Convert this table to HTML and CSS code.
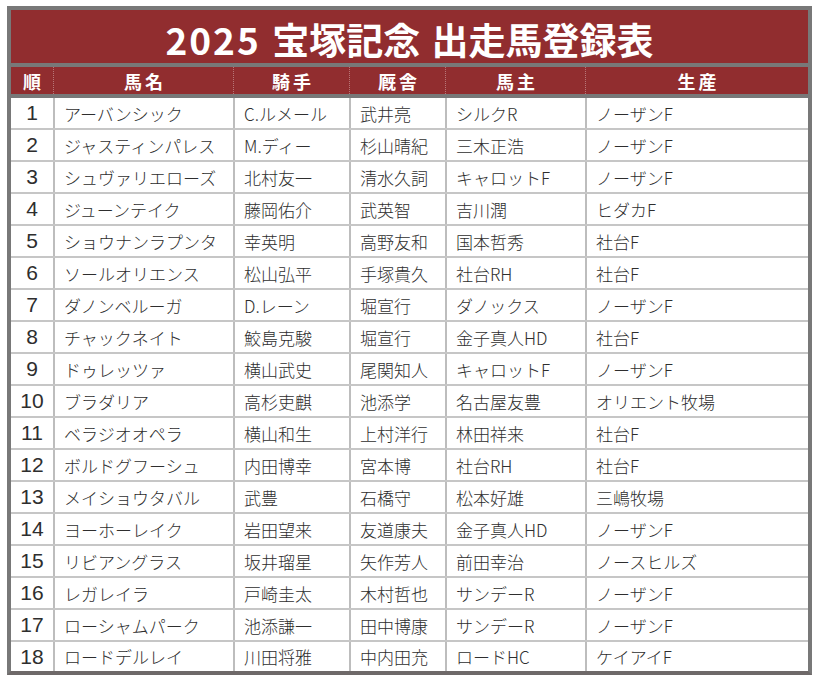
FILE: index.html
```html
<!DOCTYPE html>
<html lang="ja">
<head>
<meta charset="utf-8">
<title>2025 宝塚記念 出走馬登録表</title>
<link rel="stylesheet" href="styles.css">
</head>
<body>
<div class="board">
  <div class="title"><h1 class="title-text"><span class="yr">2025</span> 宝塚記念 出走馬登録表</h1></div>
  <div class="head">
    <div class="cell">順</div><div class="cell">馬名</div><div class="cell">騎手</div><div class="cell">厩舎</div><div class="cell">馬主</div><div class="cell">生産</div>
  </div>
  <div class="body">
    <div class="row"><div class="cell num">1</div><div class="cell">アーバンシック</div><div class="cell">C.ルメール</div><div class="cell">武井亮</div><div class="cell">シルクR</div><div class="cell">ノーザンF</div></div>
    <div class="row"><div class="cell num">2</div><div class="cell">ジャスティンパレス</div><div class="cell">M.ディー</div><div class="cell">杉山晴紀</div><div class="cell">三木正浩</div><div class="cell">ノーザンF</div></div>
    <div class="row"><div class="cell num">3</div><div class="cell">シュヴァリエローズ</div><div class="cell">北村友一</div><div class="cell">清水久詞</div><div class="cell">キャロットF</div><div class="cell">ノーザンF</div></div>
    <div class="row"><div class="cell num">4</div><div class="cell">ジューンテイク</div><div class="cell">藤岡佑介</div><div class="cell">武英智</div><div class="cell">吉川潤</div><div class="cell">ヒダカF</div></div>
    <div class="row"><div class="cell num">5</div><div class="cell">ショウナンラプンタ</div><div class="cell">幸英明</div><div class="cell">高野友和</div><div class="cell">国本哲秀</div><div class="cell">社台F</div></div>
    <div class="row"><div class="cell num">6</div><div class="cell">ソールオリエンス</div><div class="cell">松山弘平</div><div class="cell">手塚貴久</div><div class="cell">社台RH</div><div class="cell">社台F</div></div>
    <div class="row"><div class="cell num">7</div><div class="cell">ダノンベルーガ</div><div class="cell">D.レーン</div><div class="cell">堀宣行</div><div class="cell">ダノックス</div><div class="cell">ノーザンF</div></div>
    <div class="row"><div class="cell num">8</div><div class="cell">チャックネイト</div><div class="cell">鮫島克駿</div><div class="cell">堀宣行</div><div class="cell">金子真人HD</div><div class="cell">社台F</div></div>
    <div class="row"><div class="cell num">9</div><div class="cell">ドゥレッツァ</div><div class="cell">横山武史</div><div class="cell">尾関知人</div><div class="cell">キャロットF</div><div class="cell">ノーザンF</div></div>
    <div class="row"><div class="cell num">10</div><div class="cell">ブラダリア</div><div class="cell">高杉吏麒</div><div class="cell">池添学</div><div class="cell">名古屋友豊</div><div class="cell">オリエント牧場</div></div>
    <div class="row"><div class="cell num">11</div><div class="cell">ベラジオオペラ</div><div class="cell">横山和生</div><div class="cell">上村洋行</div><div class="cell">林田祥来</div><div class="cell">社台F</div></div>
    <div class="row"><div class="cell num">12</div><div class="cell">ボルドグフーシュ</div><div class="cell">内田博幸</div><div class="cell">宮本博</div><div class="cell">社台RH</div><div class="cell">社台F</div></div>
    <div class="row"><div class="cell num">13</div><div class="cell">メイショウタバル</div><div class="cell">武豊</div><div class="cell">石橋守</div><div class="cell">松本好雄</div><div class="cell">三嶋牧場</div></div>
    <div class="row"><div class="cell num">14</div><div class="cell">ヨーホーレイク</div><div class="cell">岩田望来</div><div class="cell">友道康夫</div><div class="cell">金子真人HD</div><div class="cell">ノーザンF</div></div>
    <div class="row"><div class="cell num">15</div><div class="cell">リビアングラス</div><div class="cell">坂井瑠星</div><div class="cell">矢作芳人</div><div class="cell">前田幸治</div><div class="cell">ノースヒルズ</div></div>
    <div class="row"><div class="cell num">16</div><div class="cell">レガレイラ</div><div class="cell">戸崎圭太</div><div class="cell">木村哲也</div><div class="cell">サンデーR</div><div class="cell">ノーザンF</div></div>
    <div class="row"><div class="cell num">17</div><div class="cell">ローシャムパーク</div><div class="cell">池添謙一</div><div class="cell">田中博康</div><div class="cell">サンデーR</div><div class="cell">ノーザンF</div></div>
    <div class="row"><div class="cell num">18</div><div class="cell">ロードデルレイ</div><div class="cell">川田将雅</div><div class="cell">中内田充</div><div class="cell">ロードHC</div><div class="cell">ケイアイF</div></div>
  </div>
</div>
</body>
</html>
```
FILE: styles.css
```css
html, body {
  margin: 0;
  padding: 0;
  background: #ffffff;
}

.board {
  margin: 6px 0 0 7px;
  width: 805px;
  box-sizing: border-box;
  border: 4px solid #787878;
  border-bottom-color: #6e6969;
}

.title {
  height: 57px;
  box-sizing: border-box;
  padding-top: 5px;
  background: #912d2f;
  display: flex;
  align-items: center;
  justify-content: center;
  border-bottom: 4px solid #787878;
}

.title-text {
  margin: 0;
  color: #ffffff;
  font-family: "Noto Sans CJK JP", sans-serif;
  font-weight: 700;
  font-size: 37px;
  line-height: 1;
  word-spacing: 3px;
  white-space: nowrap;
}

.title-text .yr {
  letter-spacing: 2px;
}

.head,
.row {
  display: grid;
  grid-template-columns: 42px 180px 116px 96px 140px 223px;
}

.head {
  height: 27px;
  background: #912d2f;
  border-bottom: 4px solid #787878;
}

.head .cell {
  display: flex;
  align-items: center;
  justify-content: center;
  color: #ffffff;
  font-family: "Noto Sans CJK JP", sans-serif;
  font-weight: 700;
  font-size: 18px;
  letter-spacing: 3px;
  padding-left: 3px;
  box-sizing: border-box;
}

.head .cell + .cell {
  border-left: 1px dotted rgba(255, 255, 255, 0.35);
}

.row {
  height: 32px;
  box-sizing: border-box;
  border-bottom: 2px solid #c6c6c6;
}

.row:last-child {
  height: 29px;
  border-bottom: 0;
}

.row .cell {
  display: flex;
  align-items: center;
  box-sizing: border-box;
  padding-left: 9px;
  color: #2e2e2e;
  font-family: "Liberation Sans Narrow", "Noto Sans CJK JP", sans-serif;
  font-weight: 300;
  font-size: 17px;
  white-space: nowrap;
}

.row .cell + .cell {
  border-left: 2px solid #bdbdbd;
}

.row .cell.num {
  justify-content: center;
  padding-left: 0;
  font-family: "Liberation Sans Narrow", "Liberation Sans", sans-serif;
  font-weight: 400;
  font-size: 21px;
}
```
